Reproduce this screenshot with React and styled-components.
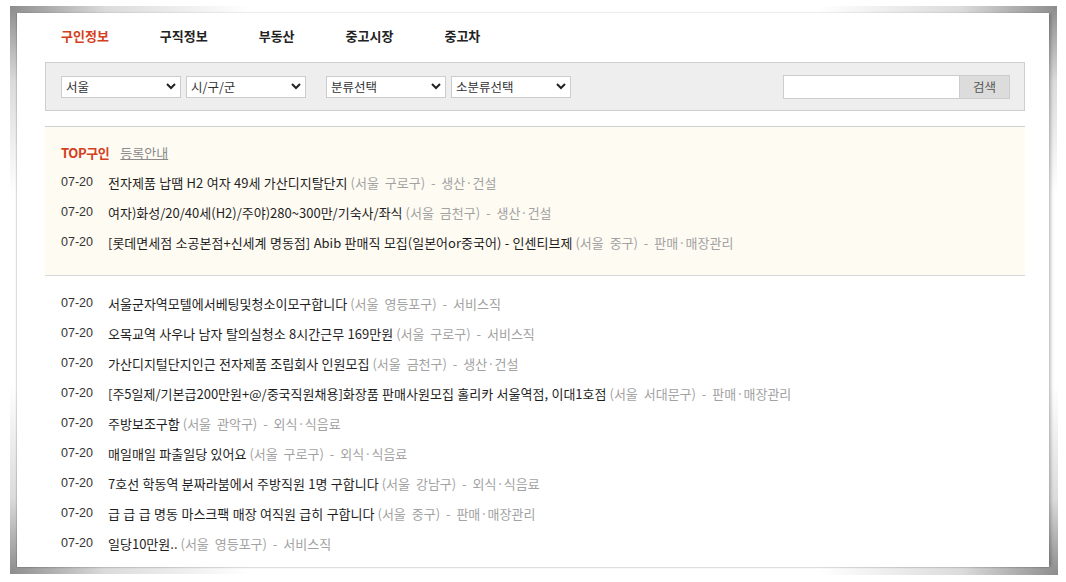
import React from "react";
import styled, { createGlobalStyle } from "styled-components";

const GlobalStyle = createGlobalStyle`
  html { background: #fff; }
  html, body { margin: 0; padding: 0; }
  body {
    font-family: "Noto Sans CJK KR", "Noto Sans", sans-serif;
    font-size: 13px;
    color: #222;
  }
`;

const cornerShade = (pos) =>
  `radial-gradient(ellipse 240px 190px at ${pos}, rgba(0,0,0,0.45), rgba(0,0,0,0.14) 40%, rgba(0,0,0,0) 100%)`;

const Stage = styled.div`
  position: relative;
  z-index: 0;
  padding: 13px 17px 14px 17px;
  width: 1032px;
  &::before,
  &::after {
    content: "";
    position: absolute;
    z-index: -1;
    width: 240px;
    height: 190px;
  }
  &::before {
    top: 6px;
    right: 9px;
    background: ${cornerShade("100% 0")};
  }
  &::after {
    bottom: 7px;
    left: 10px;
    background: ${cornerShade("0 100%")};
  }
`;

const Paper = styled.div`
  position: relative;
  width: 1032px;
  height: 554px;
  box-sizing: border-box;
  padding: 0 24px 0 28px;
  background: #fff;
  box-shadow: 3px 0 3px -1px rgba(0, 0, 0, 0.24), -1px 0 1px rgba(0, 0, 0, 0.12),
    0 1px 1px rgba(0, 0, 0, 0.08);
  &::before,
  &::after {
    content: "";
    position: absolute;
    z-index: -1;
    width: 240px;
    height: 190px;
  }
  &::before {
    top: -7px;
    left: -7px;
    background: ${cornerShade("0 0")};
  }
  &::after {
    bottom: -8px;
    right: -9px;
    background: ${cornerShade("100% 100%")};
  }
`;

const Nav = styled.nav`
  display: flex;
  height: 49px;
  box-sizing: border-box;
  padding: 14px 0 0 16px;
`;

const Tab = styled.a`
  font-size: 13px;
  font-weight: bold;
  line-height: 18px;
  margin-right: 51px;
  color: ${(p) => (p.$active ? "#d4401c" : "#222")};
  text-decoration: none;
  cursor: pointer;
`;

const SearchBar = styled.div`
  display: flex;
  align-items: center;
  height: 49px;
  box-sizing: border-box;
  border: 1px solid #cfcfcf;
  background: #eeeeee;
  padding: 0 14px 0 15px;
`;

const SelectBox = styled.div`
  display: flex;
  align-items: center;
  justify-content: space-between;
  width: 120px;
  height: 22px;
  box-sizing: border-box;
  border: 1px solid #cdcdcd;
  background: #fff;
  padding: 0 4px 0 4px;
  margin-left: ${(p) => p.$gap || 0}px;
  color: #333;
  font-size: 12.5px;
  line-height: 20px;
`;

const Spacer = styled.div`
  flex: 1;
`;

const SearchInput = styled.div`
  width: 177px;
  height: 24px;
  box-sizing: border-box;
  border: 1px solid #cdcdcd;
  background: #fff;
`;

const SearchButton = styled.div`
  width: 50px;
  height: 24px;
  box-sizing: border-box;
  border: 1px solid #cdcdcd;
  border-left: none;
  background: #dcdcdc;
  color: #555;
  font-size: 12.5px;
  display: flex;
  align-items: center;
  justify-content: center;
`;

const TopSection = styled.section`
  margin-top: 15px;
  border-top: 1px solid #cfcfcf;
  border-bottom: 1px solid #d8d8d8;
  background: #fefbf3;
  padding: 10px 0 18px;
`;

const TopHeader = styled.div`
  display: flex;
  align-items: center;
  height: 30px;
  padding-left: 16px;
`;

const TopLabel = styled.span`
  color: #d4401c;
  font-weight: bold;
  font-size: 13px;
  letter-spacing: -0.4px;
`;

const GuideLink = styled.a`
  margin-left: 11px;
  color: #8a8a8a;
  text-decoration: underline;
  font-size: 13px;
`;

const List = styled.ul`
  list-style: none;
  margin: 0;
  padding: 0;
`;

const MainList = styled(List)`
  margin-top: 12px;
`;

const Row = styled.li`
  display: flex;
  align-items: center;
  height: 30px;
  padding-left: 16px;
  font-size: 13px;
  white-space: nowrap;
`;

const DateText = styled.span`
  width: 47px;
  flex: none;
  color: #333;
  font-family: "Liberation Sans", "Noto Sans CJK KR", sans-serif;
  font-size: 12.5px;
`;

const Title = styled.span`
  color: #1e1e1e;
  word-spacing: 0.5px;
`;

const Meta = styled.span`
  color: #a2a2a2;
  margin-left: 3px;
  word-spacing: 3px;
`;

const Chevron = () => (
  <svg width="10" height="7" viewBox="0 0 10 7">
    <polyline points="1,1 5,5 9,1" fill="none" stroke="#222" strokeWidth="2" />
  </svg>
);

const tabs = ["구인정보", "구직정보", "부동산", "중고시장", "중고차"];

const topItems = [
  ["07-20", "전자제품 납땜 H2 여자 49세 가산디지탈단지", "(서울 구로구) - 생산·건설"],
  ["07-20", "여자)화성/20/40세(H2)/주야)280~300만/기숙사/좌식", "(서울 금천구) - 생산·건설"],
  ["07-20", "[롯데면세점 소공본점+신세계 명동점] Abib 판매직 모집(일본어or중국어) - 인센티브제", "(서울 중구) - 판매·매장관리"],
];

const items = [
  ["07-20", "서울군자역모텔에서베팅및청소이모구합니다", "(서울 영등포구) - 서비스직"],
  ["07-20", "오목교역 사우나 남자 탈의실청소 8시간근무 169만원", "(서울 구로구) - 서비스직"],
  ["07-20", "가산디지털단지인근 전자제품 조립회사 인원모집", "(서울 금천구) - 생산·건설"],
  ["07-20", "[주5일제/기본급200만원+@/중국직원채용]화장품 판매사원모집 홀리카 서울역점, 이대1호점", "(서울 서대문구) - 판매·매장관리"],
  ["07-20", "주방보조구함", "(서울 관악구) - 외식·식음료"],
  ["07-20", "매일매일 파출일당 있어요", "(서울 구로구) - 외식·식음료"],
  ["07-20", "7호선 학동역 분짜라붐에서 주방직원 1명 구합니다", "(서울 강남구) - 외식·식음료"],
  ["07-20", "급 급 급 명동 마스크팩 매장 여직원 급히 구합니다", "(서울 중구) - 판매·매장관리"],
  ["07-20", "일당10만원..", "(서울 영등포구) - 서비스직"],
];

const JobRow = ({ item }) => (
  <Row>
    <DateText>{item[0]}</DateText>
    <Title>{item[1]}</Title>
    <Meta>{item[2]}</Meta>
  </Row>
);

export default function App() {
  return (
    <>
      <GlobalStyle />
      <Stage>
        <Paper>
          <Nav>
            {tabs.map((t, i) => (
              <Tab key={t} $active={i === 0}>{t}</Tab>
            ))}
          </Nav>
          <SearchBar>
            <SelectBox>서울<Chevron /></SelectBox>
            <SelectBox $gap={5}>시/구/군<Chevron /></SelectBox>
            <SelectBox $gap={20}>분류선택<Chevron /></SelectBox>
            <SelectBox $gap={5}>소분류선택<Chevron /></SelectBox>
            <Spacer />
            <SearchInput />
            <SearchButton>검색</SearchButton>
          </SearchBar>
          <TopSection>
            <TopHeader>
              <TopLabel>TOP구인</TopLabel>
              <GuideLink>등록안내</GuideLink>
            </TopHeader>
            <List>
              {topItems.map((it, i) => <JobRow key={i} item={it} />)}
            </List>
          </TopSection>
          <MainList>
            {items.map((it, i) => <JobRow key={i} item={it} />)}
          </MainList>
        </Paper>
      </Stage>
    </>
  );
}
